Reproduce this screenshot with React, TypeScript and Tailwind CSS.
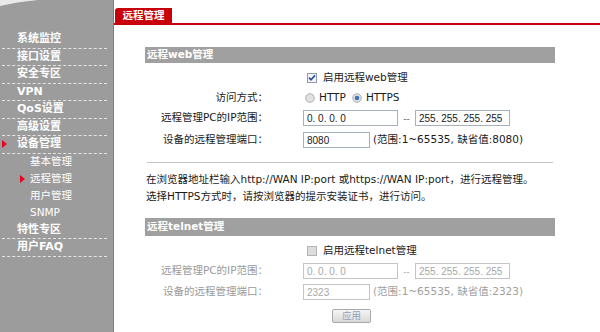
import React from "react";

const font = "font-['DejaVu_Sans','Noto_Sans_CJK_SC',sans-serif]";
const numFont = "font-['Liberation_Sans','Noto_Sans_CJK_SC',sans-serif]";

const mainTop = ["系统监控", "接口设置", "安全专区", "VPN", "QoS设置", "高级设置"];
const subItems = ["基本管理", "远程管理", "用户管理", "SNMP"];

function RedArrow() {
  return (
    <svg width="5" height="8" viewBox="0 0 5 8">
      <path d="M0 0 L5 4 L0 8 Z" fill="#e8001c" />
    </svg>
  );
}

function MainItem({ label, marker }: { label: string; marker?: boolean }) {
  return (
    <div className="flex h-[17.5px] items-center border-b border-dashed border-[#e4e4e4]">
      <span className="flex w-[15px] items-center">{marker && <RedArrow />}</span>
      <span className="text-[11px] font-bold text-white">{label}</span>
    </div>
  );
}

function Sidebar() {
  return (
    <aside className="flex w-[114px] shrink-0 flex-col border-r border-[#7c7c7c] bg-[#9c9c9c]">
      <svg width="113" height="31" viewBox="0 0 113 31" className="block">
        <path d="M0 0 H38 Q16 2 0 6 Z" fill="#e9e9e9" />
      </svg>
      <div className="ml-[2px] w-[105px]">
        {mainTop.map((m) => (
          <MainItem key={m} label={m} />
        ))}
        <MainItem label="设备管理" marker />
        {subItems.map((s) => (
          <div key={s} className="flex h-[17px] items-center pl-[18px]">
            <span className="flex w-[10px] items-center">{s === "远程管理" && <RedArrow />}</span>
            <span className="text-[10.5px] text-white">{s}</span>
          </div>
        ))}
        <MainItem label="特性专区" />
        <MainItem label="用户FAQ" />
      </div>
    </aside>
  );
}

function Checkbox({ checked, disabled }: { checked?: boolean; disabled?: boolean }) {
  return (
    <svg width="10" height="10" viewBox="0 0 10 10">
      <rect
        x="0.5"
        y="0.5"
        width="9"
        height="9"
        fill={disabled ? "#dcdcdc" : "#f4f4f4"}
        stroke={disabled ? "#b4b4b4" : "#8b9bb3"}
      />
      {checked && <path d="M2 4.6 L4 6.8 L8 2.4" fill="none" stroke="#2a4fa0" strokeWidth="1.6" />}
    </svg>
  );
}

function Radio({ checked }: { checked?: boolean }) {
  return (
    <svg width="10" height="10" viewBox="0 0 10 10">
      <circle cx="5" cy="5" r="4.3" fill="#e2e2e2" stroke="#b0b0b0" strokeWidth="1" />
      {checked && <circle cx="5" cy="5" r="2.3" fill="#3f73b8" />}
    </svg>
  );
}

function Row({
  label,
  children,
  disabled,
  className = "",
}: {
  label?: string;
  children: React.ReactNode;
  disabled?: boolean;
  className?: string;
}) {
  return (
    <div className={`flex h-[20px] items-center ${className}`}>
      <div className={`w-[123px] text-right ${disabled ? "text-[#9a9a9a]" : "text-[#1a1a1a]"}`}>{label}</div>
      <div className="ml-[35px] flex items-center">{children}</div>
    </div>
  );
}

function TextBox({ value, width, disabled }: { value: string; width: string; disabled?: boolean }) {
  return (
    <div
      className={`flex h-[16px] items-center border pl-[3px] ${numFont} text-[10px] ${width} ${
        disabled ? "border-[#c4c4c4] text-[#a8a8a8]" : "border-[#a7b0bc] text-[#1a1a1a]"
      }`}
    >
      {value}
    </div>
  );
}

function IpRange({ disabled }: { disabled?: boolean }) {
  return (
    <>
      <TextBox value="0. 0. 0. 0" width="w-[95px]" disabled={disabled} />
      <span className={`w-[17px] pt-[4px] text-center text-[9px] ${disabled ? "text-[#aaa]" : "text-[#555]"}`}>--</span>
      <TextBox value="255. 255. 255. 255" width="w-[95px]" disabled={disabled} />
    </>
  );
}

function SectionBar({ title, h }: { title: string; h: string }) {
  return (
    <div className={`flex items-center bg-[#a0a0a0] pl-[2px] text-[10.5px] font-bold text-white ${h}`}>{title}</div>
  );
}

export default function App() {
  return (
    <div className={`flex h-[332px] w-[600px] overflow-hidden bg-white text-[10.5px] ${font}`}>
      <Sidebar />
      <main className="flex-1 bg-white">
        <div className="h-[25px] border-b-2 border-[#c8000a] pl-[1px] pt-[8px]">
          <div className="flex h-[15px] w-[57px] items-center justify-center rounded-tl-[3px] bg-[#c8000a] text-[10.5px] font-bold text-white">
            远程管理
          </div>
        </div>

        <div className="ml-[31px] mt-[22px] w-[410px]">
          <SectionBar title="远程web管理" h="h-[16px]" />
          <Row className="mt-[5px]">
            <span className="flex items-center gap-[6px] pl-[4px]">
              <Checkbox checked />
              <span className="text-[#1a1a1a]">启用远程web管理</span>
            </span>
          </Row>
          <Row label="访问方式：">
            <span className="flex items-center pl-[2px] text-[#1a1a1a]">
              <Radio />
              <span className="ml-[4px]">HTTP</span>
              <span className="ml-[6px]">
                <Radio checked />
              </span>
              <span className="ml-[4px]">HTTPS</span>
            </span>
          </Row>
          <Row label="远程管理PC的IP范围：">
            <IpRange />
          </Row>
          <Row label="设备的远程管理端口：" className="mt-[2px]">
            <TextBox value="8080" width="w-[67px]" />
            <span className="ml-[3px] text-[#1a1a1a]">(范围:1~65535, 缺省值:8080)</span>
          </Row>

          <div className="ml-[2px] mt-[12px] h-px w-[406px] bg-[#c4c4c4]" />

          <div className="mt-[8px] pl-[1px] leading-[17px] text-[#1a1a1a]">
            <p>在浏览器地址栏输入http://WAN IP:port 或https://WAN IP:port，进行远程管理。</p>
            <p>选择HTTPS方式时，请按浏览器的提示安装证书，进行访问。</p>
          </div>

          <div className="mt-[13px]">
            <SectionBar title="远程telnet管理" h="h-[18px]" />
          </div>
          <Row className="mt-[5px]">
            <span className="flex items-center gap-[6px] pl-[4px]">
              <Checkbox disabled />
              <span className="text-[#1a1a1a]">启用远程telnet管理</span>
            </span>
          </Row>
          <Row label="远程管理PC的IP范围：" disabled>
            <IpRange disabled />
          </Row>
          <Row label="设备的远程管理端口：" disabled className="mt-[1px]">
            <TextBox value="2323" width="w-[67px]" disabled />
            <span className="ml-[3px] text-[#a0a0a0]">(范围:1~65535, 缺省值:2323)</span>
          </Row>
          <div className="mt-[7px] pl-[187px]">
            <button className="flex h-[14px] w-[39px] items-center justify-center rounded-[2px] border border-[#a9a9a9] bg-gradient-to-b from-[#f6f6f6] to-[#d9d9d9] text-[9.5px] text-[#8fa4bd]">
              应用
            </button>
          </div>
        </div>
      </main>
    </div>
  );
}
